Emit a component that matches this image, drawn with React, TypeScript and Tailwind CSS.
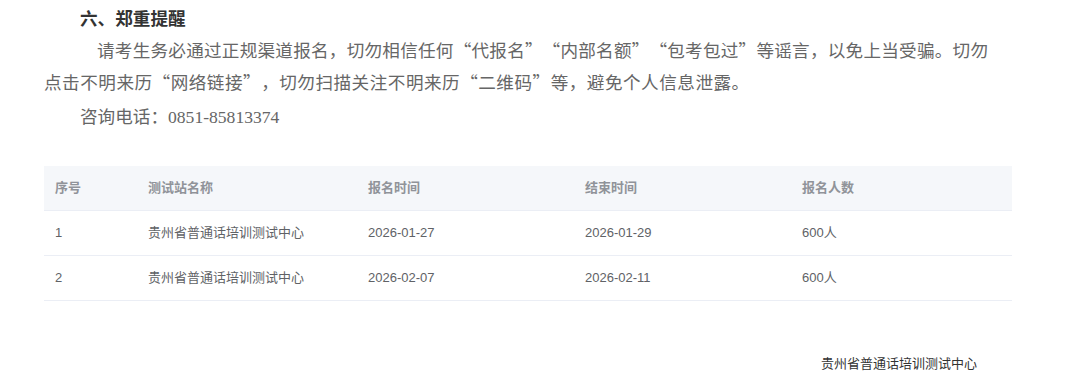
import React from "react";

const rows = [
  { id: "1", name: "贵州省普通话培训测试中心", start: "2026-01-27", end: "2026-01-29", count: "600人" },
  { id: "2", name: "贵州省普通话培训测试中心", start: "2026-02-07", end: "2026-02-11", count: "600人" },
];

const cjk = "font-['Noto_Sans_CJK_SC',sans-serif] [text-spacing-trim:space-all]";
const sans = "font-['Liberation_Sans','Noto_Sans_CJK_SC',sans-serif]";
const cols = "grid grid-cols-[92px_220px_217px_217px_222px] w-[968px]";

const App: React.FC = () => {
  return (
    <div className="w-[1080px] h-[386px] bg-white overflow-hidden pl-[44px]">
      {/* notice text */}
      <div className={`${cjk} text-[17.6px]`}>
        <h3 className="pt-[2px] pl-[36px] leading-[32px] font-bold text-[#333]">
          六、郑重提醒
        </h3>
        <div className="leading-[32px] text-[#666]">
          <p className="w-[944px] pl-[53px] whitespace-nowrap text-justify [text-align-last:justify]">
            请考生务必通过正规渠道报名，切勿相信任何“代报名”“内部名额”“包考包过”等谣言，以免上当受骗。切勿
          </p>
          <p className="tracking-[0.5px]">
            点击不明来历“网络链接”，切勿扫描关注不明来历“二维码”等，避免个人信息泄露。
          </p>
        </div>
        <p className="mt-[2px] pl-[36px] leading-[32px] text-[#666]">
          咨询电话：<span className="font-['Liberation_Serif',serif]">0851-85813374</span>
        </p>
      </div>

      {/* table */}
      <div className={`${sans} text-[13px] mt-[33px]`}>
        <div className={`${cols} h-[45px] items-center bg-[#f5f7fa] border-b border-[#ebeef5] text-[#909399] font-semibold`}>
          <div className="pl-[11px]">序号</div>
          <div className="pl-[12px]">测试站名称</div>
          <div className="pl-[12px]">报名时间</div>
          <div className="pl-[12px]">结束时间</div>
          <div className="pl-[12px]">报名人数</div>
        </div>
        {rows.map((r) => (
          <div
            key={r.id}
            className={`${cols} h-[45px] items-center border-b border-[#ebeef5] text-[#606266]`}
          >
            <div className="pl-[11px]">{r.id}</div>
            <div className="pl-[12px]">{r.name}</div>
            <div className="pl-[12px]">{r.start}</div>
            <div className="pl-[12px]">{r.end}</div>
            <div className="pl-[12px]">{r.count}</div>
          </div>
        ))}
      </div>

      {/* footer */}
      <p className={`${sans} text-[13px] leading-[20px] text-[#333] mt-[53px] pl-[777px]`}>
        贵州省普通话培训测试中心
      </p>
    </div>
  );
};

export default App;
